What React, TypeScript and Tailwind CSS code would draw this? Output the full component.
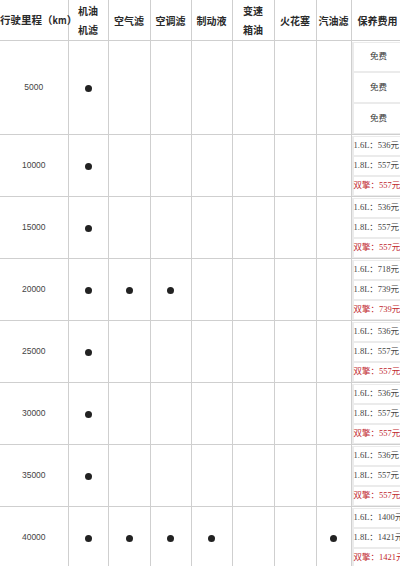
import React from 'react'

type Row = { km: string; dots: number[]; prices: [string, string, string] | null }

const heads = [
    ['机油', '机滤'],
    ['空气滤'],
    ['空调滤'],
    ['制动液'],
    ['变速', '箱油'],
    ['火花塞'],
    ['汽油滤'],
]

const std: [string, string, string] = ['536', '557', '557']

const rows: Row[] = [
    { km: '5000', dots: [1, 0, 0, 0, 0, 0, 0], prices: null },
    { km: '10000', dots: [1, 0, 0, 0, 0, 0, 0], prices: std },
    { km: '15000', dots: [1, 0, 0, 0, 0, 0, 0], prices: std },
    { km: '20000', dots: [1, 1, 1, 0, 0, 0, 0], prices: ['718', '739', '739'] },
    { km: '25000', dots: [1, 0, 0, 0, 0, 0, 0], prices: std },
    { km: '30000', dots: [1, 0, 0, 0, 0, 0, 0], prices: std },
    { km: '35000', dots: [1, 0, 0, 0, 0, 0, 0], prices: std },
    { km: '40000', dots: [1, 1, 1, 1, 0, 0, 1], prices: ['1400', '1421', '1421'] },
]

const cell = 'border border-[#cfcfcf] p-0 text-center align-middle'
const headFont = { fontFamily: '"Noto Sans CJK SC", sans-serif' }

const Dot = () => <span className="inline-block w-[7px] h-[7px] rounded-full bg-[#222222] align-middle" />

const PriceCell = ({ prices }: { prices: Row['prices'] }) => {
    if (!prices) {
        return (
            <div className="flex flex-col gap-[2px] bg-[#ebebeb] pl-[2px] py-[1px] h-[92px]">
                {['免费', '免费', '免费'].map((t, i) => (
                    <div key={i} className="flex-1 bg-white flex items-center justify-center text-[8.5px] text-[#333333]">{t}</div>
                ))}
            </div>
        )
    }
    const [a, b, c] = prices
    const line = 'flex-1 bg-white flex items-center text-[8.5px] whitespace-nowrap'
    return (
        <div className="flex flex-col gap-[2px] bg-[#ebebeb] pl-[2px] py-[1px] h-[60px]">
            <div className={`${line} text-[#444444]`}>1.6L：{a}元</div>
            <div className={`${line} text-[#444444]`}>1.8L：{b}元</div>
            <div className={`${line} text-[#c0262c]`}>双擎：{c}元</div>
        </div>
    )
}

export default function App() {
    return (
        <div className="w-[400px] h-[566px] overflow-hidden bg-white" style={{ fontFamily: '"Liberation Serif", "Noto Sans CJK SC", serif' }}>
            <table className="table-fixed border-collapse w-[404px] -mt-px">
                <colgroup>
                    <col className="w-[68px]" />
                    <col className="w-[40px]" />
                    <col className="w-[42px]" />
                    <col className="w-[41px]" />
                    <col className="w-[41px]" />
                    <col className="w-[42px]" />
                    <col className="w-[42px]" />
                    <col className="w-[35px]" />
                    <col className="w-[53px]" />
                </colgroup>
                <thead>
                    <tr className="h-[41px]">
                        <th className={`${cell} border-l-0 font-semibold text-[10.5px] text-[#2a2a2a] whitespace-nowrap`} style={headFont}>
                            行驶里程（<span className="text-[9px]">km</span>）
                        </th>
                        {heads.map((h, i) => (
                            <th key={i} className={`${cell} font-semibold text-[10px] text-[#2a2a2a] leading-[19px]`} style={headFont}>
                                {h.map((l, j) => <div key={j}>{l}</div>)}
                            </th>
                        ))}
                        <th className={`${cell} font-semibold text-[10px] text-[#2a2a2a] whitespace-nowrap`} style={headFont}>保养费用</th>
                    </tr>
                </thead>
                <tbody>
                    {rows.map(r => (
                        <tr key={r.km} className={r.prices ? 'h-[62px]' : 'h-[94px]'}>
                            <td className={`${cell} border-l-0 text-[8.5px] text-[#444444]`} style={{ fontFamily: '"Liberation Sans", sans-serif' }}>{r.km}</td>
                            {r.dots.map((d, i) => (
                                <td key={i} className={cell}>{d ? <Dot /> : null}</td>
                            ))}
                            <td className={`${cell} text-left`}>
                                <PriceCell prices={r.prices} />
                            </td>
                        </tr>
                    ))}
                </tbody>
            </table>
        </div>
    )
}
